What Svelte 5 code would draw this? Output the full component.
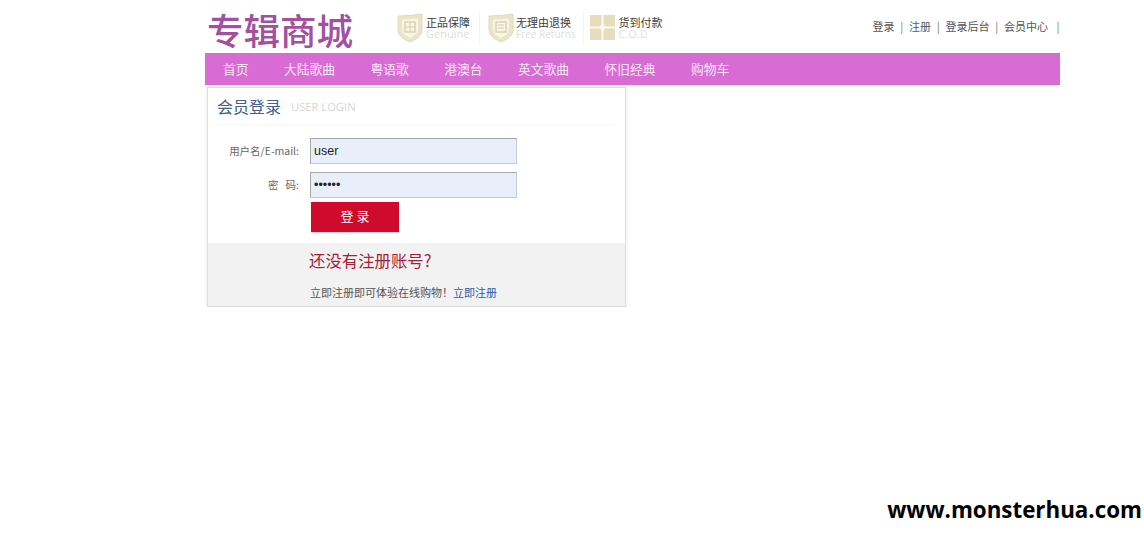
<script lang="ts">
  const nav = ['首页', '大陆歌曲', '粤语歌', '港澳台', '英文歌曲', '怀旧经典', '购物车'];
  const topLinks = ['登录', '注册', '登录后台', '会员中心'];
  let username = $state('user');
  let password = $state('123456');
</script>

<div class="page">
  <header class="top">
    <div class="logo">专辑商城</div>
    <div class="promises">
      <div class="promise">
        <svg class="shield" viewBox="0 0 26 30" aria-hidden="true">
          <path d="M1 3 Q13 3 25 1 V17 Q25 24 13 29 Q1 24 1 17Z" fill="#ebe4c8" stroke="#e2d9b8" />
          <path d="M5 6.500 Q13 6.500 21 5.500 V16 Q21 21.500 13 25 Q5 21.500 5 16Z" fill="#f8f4e6" />
          <rect x="8" y="9" width="10" height="10" fill="none" stroke="#d8cea6" stroke-width="1.300" />
          <path d="M13 9 V19 M8 14 H18" stroke="#d8cea6" />
        </svg>
        <div class="promise-text">
          <b>正品保障</b>
          <span class="genuine">Genuine</span>
        </div>
      </div>
      <div class="promise returns">
        <svg class="shield" viewBox="0 0 26 30" aria-hidden="true">
          <path d="M1 3 Q13 3 25 1 V17 Q25 24 13 29 Q1 24 1 17Z" fill="#ebe4c8" stroke="#e2d9b8" />
          <path d="M5 6.500 Q13 6.500 21 5.500 V16 Q21 21.500 13 25 Q5 21.500 5 16Z" fill="#f8f4e6" />
          <rect x="8" y="9" width="10" height="10" fill="none" stroke="#d8cea6" stroke-width="1.300" />
          <path d="M10 12 H16 M10 15 H16" stroke="#d8cea6" />
        </svg>
        <div class="promise-text">
          <b>无理由退换</b>
          <span>Free Returns</span>
        </div>
      </div>
      <div class="promise last">
        <svg class="gift" viewBox="0 0 25 25" aria-hidden="true">
          <rect width="25" height="25" fill="#e6ddbc" />
          <path d="M12.500 0 V25 M0 12.500 H25" stroke="#fbf8ec" stroke-width="2" />
          <path d="M12.500 7 L15.500 12.500 L12.500 18 L9.500 12.500Z" fill="#fbf8ec" />
        </svg>
        <div class="promise-text">
          <b>货到付款</b>
          <span class="cod">C.O.D</span>
        </div>
      </div>
    </div>
    <nav class="top-links">
      {#each topLinks as link}
        <a href="#top">{link}</a>
        <i>|</i>
      {/each}
    </nav>
  </header>

  <nav class="main-nav">
    {#each nav as item}
      <a href="#top">{item}</a>
    {/each}
  </nav>

  <section class="login">
    <div class="login-title">
      <h2>会员登录</h2>
      <span>USER LOGIN</span>
    </div>
    <form class="login-form" onsubmit={(e) => e.preventDefault()}>
      <label class="row">
        <span>用户名/E-mail:</span>
        <input type="text" bind:value={username} />
      </label>
      <label class="row">
        <span>密&nbsp;&nbsp;&nbsp;码:</span>
        <input type="password" bind:value={password} />
      </label>
      <button type="submit">登 录</button>
    </form>
    <div class="register">
      <h3>还没有注册账号?</h3>
      <p>立即注册即可体验在线购物！<a href="#top">立即注册</a></p>
    </div>
  </section>
</div>

<div class="watermark">www.monsterhua.com</div>

<style>
  :global(body) {
    margin: 0;
    background: #fff;
    font-family: "Noto Sans CJK SC", "Liberation Sans", sans-serif;
  }

  .page {
    width: 855px;
    margin-left: 205px;
  }

  a {
    text-decoration: none;
    color: inherit;
  }

  .top {
    height: 53px;
    display: flex;
    align-items: flex-start;
  }

  .logo {
    width: 190px;
    margin: 7px 0 0 2px;
    font-size: 36.500px;
    line-height: 46px;
    font-weight: 500;
    color: #a2509f;
    white-space: nowrap;
  }

  .promises {
    display: flex;
    margin-top: 13px;
  }

  .promise {
    display: flex;
    gap: 3px;
    height: 30px;
    padding-right: 9px;
    margin-right: 8px;
    border-right: 1px solid #f4f4f0;
  }

  .promise.returns {
    gap: 2px;
    padding-right: 7px;
    margin-right: 6px;
  }

  .promise.last {
    border-right: none;
    margin: 0;
  }

  .shield {
    width: 26px;
    height: 30px;
  }

  .gift {
    width: 25px;
    height: 25px;
    margin: 2px 1px 0 0;
  }

  .promise-text {
    display: flex;
    flex-direction: column;
    padding-top: 2px;
  }

  .promise-text b {
    font-size: 11px;
    line-height: 14px;
    font-weight: 400;
    color: #3c3c3c;
    white-space: nowrap;
  }

  .promise-text span {
    font-family: "Open Sans", sans-serif;
    font-size: 10px;
    line-height: 10px;
    color: #dededa;
    white-space: nowrap;
  }

  .promise-text .genuine {
    font-size: 11px;
  }

  .promise-text .cod {
    letter-spacing: 0.500px;
  }

  .top-links {
    margin: 18px 0 0 auto;
    display: flex;
    font-size: 11px;
    line-height: 16px;
    color: #555;
  }

  .top-links i {
    font-style: normal;
    width: 14.500px;
    text-align: center;
    color: #777;
  }

  .top-links i:last-child {
    width: 4px;
    margin-left: 8px;
  }

  .main-nav {
    height: 32px;
    background: #d96bd4;
    display: flex;
    gap: 35.500px;
    padding-left: 18px;
    font-size: 12.750px;
    line-height: 31px;
    color: #f8e6f6;
  }

  .login {
    width: 417px;
    margin: 2px 0 0 2px;
    border: 1px solid #dcdcdc;
    box-shadow: 0 0 0 2px #f8f8f8;
  }

  .login-title {
    height: 36px;
    margin: 0 10px;
    display: flex;
    align-items: center;
    gap: 10px;
    border-bottom: 1px solid #f6f6f6;
  }

  .login-title h2 {
    margin: -1px 0 0 -1px;
    font-size: 16px;
    font-weight: 400;
    color: #41608a;
  }

  .login-title span {
    font-family: "Open Sans", sans-serif;
    font-size: 11.200px;
    color: #d6d6d6;
  }

  .login-form {
    padding: 13px 0 10px 102px;
    display: flex;
    flex-direction: column;
    height: 95px;
  }

  .row {
    display: flex;
    align-items: center;
    height: 26px;
    margin-bottom: 8px;
  }

  .row span {
    width: 91px;
    margin: -2px 11px 0 -102px;
    text-align: right;
    font-size: 10.500px;
    color: #666;
    white-space: nowrap;
  }

  input {
    box-sizing: border-box;
    width: 207px;
    height: 26px;
    padding: 0 3px;
    background: #e8effa;
    border: 1px solid #c6cad2;
    border-top-color: #a8a8a8;
    border-left-color: #a8a8a8;
    font-family: "Liberation Sans", sans-serif;
    font-size: 12.500px;
    color: #222;
    outline: none;
  }

  button {
    width: 88px;
    height: 30px;
    margin: -4px 0 0 1px;
    padding: 0 0 3px;
    background: #d00a2c;
    border: none;
    box-shadow: 0 1px 0 #eecdd4;
    font-family: inherit;
    font-size: 13px;
    color: #fff;
  }

  .register {
    height: 63px;
    background: #f2f2f2;
    padding-left: 101px;
  }

  .register h3 {
    margin: 0;
    padding-top: 6px;
    font-size: 16.400px;
    line-height: 23px;
    font-weight: 400;
    color: #a81c3a;
  }

  .register p {
    margin: 12px 0 0 1px;
    font-size: 11px;
    line-height: 16px;
    color: #555;
  }

  .register a {
    color: #2b5a9a;
  }

  .watermark {
    position: absolute;
    right: 2px;
    top: 495px;
    font-family: "Open Sans", sans-serif;
    font-size: 22.350px;
    line-height: 30px;
    font-weight: 700;
    color: #000;
  }
</style>
